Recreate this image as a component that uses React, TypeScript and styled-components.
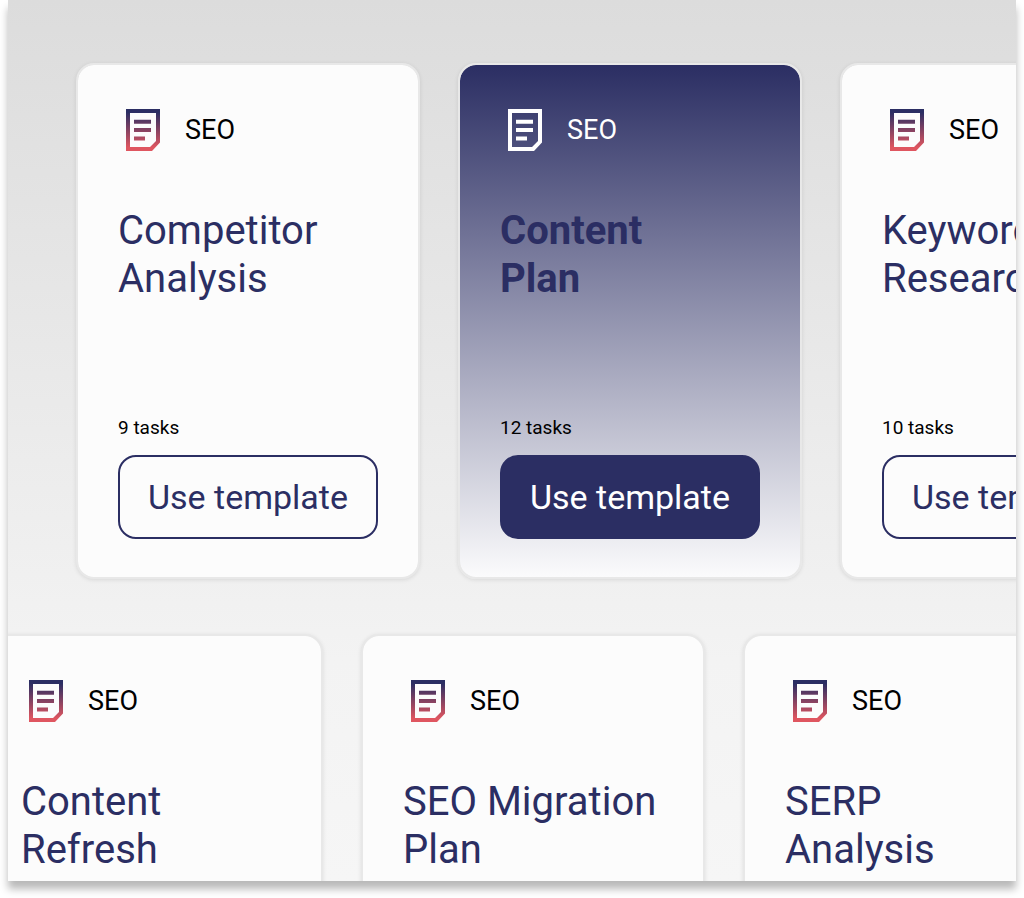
import React, { useId } from "react";
import styled, { createGlobalStyle, css } from "styled-components";

const NAVY = "#2b2e63";

const GlobalStyle = createGlobalStyle`
  *, *::before, *::after { box-sizing: border-box; }
  body {
    margin: 0;
    background: #ffffff;
    font-family: Roboto, "Liberation Sans", sans-serif;
    color: #000000;
  }
`;

const Page = styled.div`
  height: 100vh;
  padding: 0 8px 17px;
  overflow: hidden;
`;

const Gallery = styled.main`
  display: flex;
  flex-direction: column;
  gap: 55px;
  height: 100%;
  padding-top: 63px;
  overflow: hidden;
  background: linear-gradient(#dcdcdc 0%, #f3f3f3 75%, #f6f6f6 100%);
`;

const Frame = styled.div`
  height: 100%;
  box-shadow: 0 8px 8px rgba(0, 0, 0, 0.28);
`;

const Row = styled.section<{ $start: number }>`
  display: flex;
  gap: 38px;
  margin-left: ${(p) => p.$start}px;
`;

const Card = styled.article<{ $active?: boolean }>`
  flex: none;
  display: flex;
  flex-direction: column;
  width: 344px;
  height: 516px;
  padding: 44px 40px 38px;
  border: 2px solid #e8e8e8;
  border-radius: 18px;
  background: #fcfcfc;
  background-clip: padding-box;
  box-shadow: 0 1px 4px rgba(0, 0, 0, 0.1);
  ${(p) =>
    p.$active &&
    css`
      background: linear-gradient(#2b2e63 0%, #fbfbfc 100%) padding-box;
    `}
`;

const Category = styled.div<{ $active?: boolean }>`
  display: flex;
  align-items: center;
  gap: 25px;
  height: 42px;
  margin-bottom: 56px;
  padding-left: 8px;
  font-size: 27px;
  line-height: 32px;
  color: ${(p) => (p.$active ? "#ffffff" : "#000000")};
`;

const Title = styled.h2<{ $active?: boolean }>`
  margin: 0;
  font-size: 40px;
  line-height: 48px;
  font-weight: ${(p) => (p.$active ? 700 : 400)};
  color: ${NAVY};
`;

const Tasks = styled.p`
  margin: auto 0 15px;
  font-size: 19px;
  line-height: 24px;
`;

const TemplateButton = styled.button<{ $active?: boolean }>`
  flex: none;
  height: 84px;
  padding: 0;
  border: 2px solid ${NAVY};
  border-radius: 18px;
  background: ${(p) => (p.$active ? NAVY : "transparent")};
  color: ${(p) => (p.$active ? "#ffffff" : NAVY)};
  font-family: inherit;
  font-size: 34px;
  line-height: 40px;
  white-space: nowrap;
  cursor: pointer;
`;

function DocumentIcon({ active }: { active?: boolean }) {
  const id = useId();
  const paint = active ? "#ffffff" : `url(#${id})`;
  return (
    <svg width="34" height="42" viewBox="0 0 34 42" aria-hidden="true">
      <defs>
        <linearGradient id={id} gradientUnits="userSpaceOnUse" x1="0" y1="0" x2="0" y2="42">
          <stop offset="0.08" stopColor="#2b2e63" />
          <stop offset="0.92" stopColor="#df5660" />
        </linearGradient>
      </defs>
      <path
        fill={paint}
        fillRule="evenodd"
        d="M0 0H34V33.5L26 42H0ZM4 4V38H24L30 32V4ZM8 10.7H25V14.7H8ZM8 19H25V23H8ZM8 27.4H19V31.4H8Z"
      />
    </svg>
  );
}

type Template = { title: [string, string]; tasks: number; active?: boolean };

const upper: Template[] = [
  { title: ["Competitor", "Analysis"], tasks: 9 },
  { title: ["Content", "Plan"], tasks: 12, active: true },
  { title: ["Keyword", "Research"], tasks: 10 },
];

const lower: Template[] = [
  { title: ["Content", "Refresh"], tasks: 8 },
  { title: ["SEO Migration", "Plan"], tasks: 14 },
  { title: ["SERP", "Analysis"], tasks: 7 },
];

function TemplateCard({ title, tasks, active }: Template) {
  return (
    <Card $active={active}>
      <Category $active={active}>
        <DocumentIcon active={active} />
        SEO
      </Category>
      <Title $active={active}>
        {title[0]}
        <br />
        {title[1]}
      </Title>
      <Tasks>{tasks} tasks</Tasks>
      <TemplateButton type="button" $active={active}>
        Use template
      </TemplateButton>
    </Card>
  );
}

export default function App() {
  return (
    <Page>
      <GlobalStyle />
      <Frame>
        <Gallery>
          <Row $start={68}>
            {upper.map((t) => (
              <TemplateCard key={t.title.join(" ")} {...t} />
            ))}
          </Row>
          <Row $start={-29}>
            {lower.map((t) => (
              <TemplateCard key={t.title.join(" ")} {...t} />
            ))}
          </Row>
        </Gallery>
      </Frame>
    </Page>
  );
}
